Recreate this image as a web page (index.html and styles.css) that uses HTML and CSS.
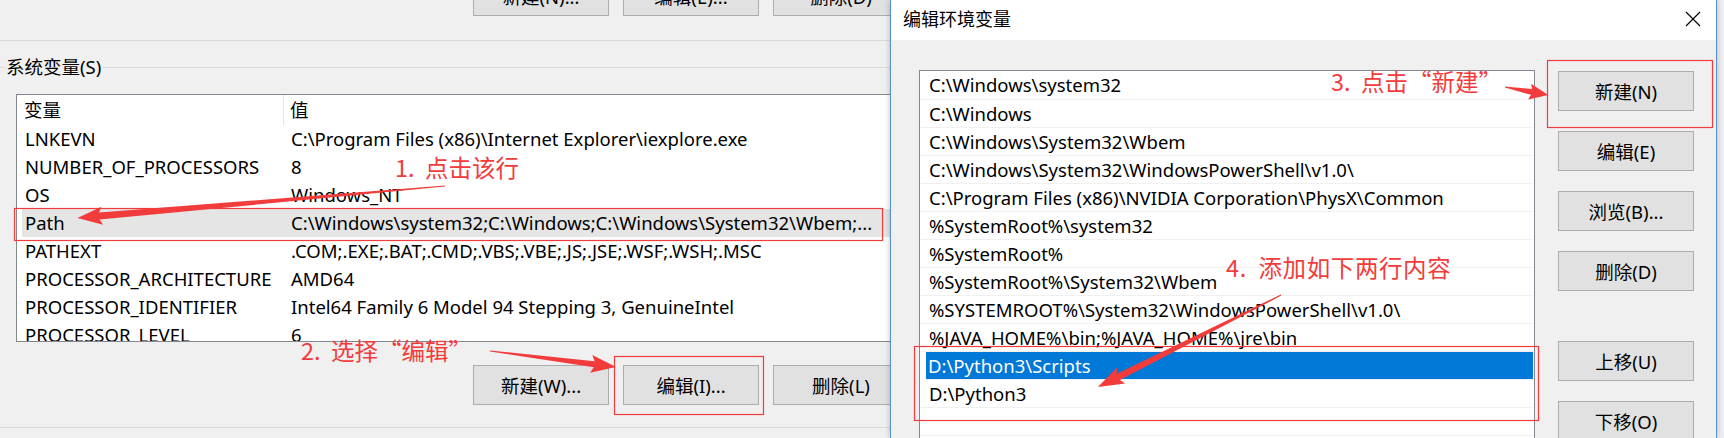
FILE: index.html
```html
<!DOCTYPE html>
<html lang="zh-CN">
    <head>
        <meta charset="UTF-8">
        <title>编辑环境变量</title>
        <link rel="stylesheet" href="styles.css">
    </head>
    <body>
        <!-- Background window: 环境变量 -->
        <div class="env-window">
            <div class="btn-row top-row">
                <button class="win-btn">新建(N)...</button>
                <button class="win-btn">编辑(E)...</button>
                <button class="win-btn">删除(D)</button>
            </div>
            <div class="divider top-divider"></div>

            <div class="group-title"><span>系统变量(S)</span></div>

            <div class="var-list">
                <div class="var-body">
                    <div class="var-row var-head">
                        <span class="col-name">变量</span>
                        <span class="col-value">值</span>
                    </div>
                    <div class="var-row"><span class="col-name">LNKEVN</span><span class="col-value">C:\Program Files (x86)\Internet Explorer\iexplore.exe</span></div>
                    <div class="var-row"><span class="col-name">NUMBER_OF_PROCESSORS</span><span class="col-value">8</span></div>
                    <div class="var-row"><span class="col-name">OS</span><span class="col-value">Windows_NT</span></div>
                    <div class="var-row hover"><span class="col-name">Path</span><span class="col-value">C:\Windows\system32;C:\Windows;C:\Windows\System32\Wbem;...</span></div>
                    <div class="var-row"><span class="col-name">PATHEXT</span><span class="col-value">.COM;.EXE;.BAT;.CMD;.VBS;.VBE;.JS;.JSE;.WSF;.WSH;.MSC</span></div>
                    <div class="var-row"><span class="col-name">PROCESSOR_ARCHITECTURE</span><span class="col-value">AMD64</span></div>
                    <div class="var-row"><span class="col-name">PROCESSOR_IDENTIFIER</span><span class="col-value">Intel64 Family 6 Model 94 Stepping 3, GenuineIntel</span></div>
                    <div class="var-row"><span class="col-name">PROCESSOR_LEVEL</span><span class="col-value">6</span></div>
                </div>
                <div class="scrollbar">
                    <div class="sb-arrow">&#9652;</div>
                    <div class="sb-thumb"></div>
                    <div class="sb-track"></div>
                    <div class="sb-arrow">&#9662;</div>
                </div>
            </div>

            <div class="btn-row bottom-row">
                <button class="win-btn">新建(W)...</button>
                <button class="win-btn">编辑(I)...</button>
                <button class="win-btn">删除(L)</button>
            </div>
            <div class="divider bottom-divider"></div>
        </div>

        <!-- Foreground dialog -->
        <div class="dialog">
            <div class="title-bar">
                <span class="title">编辑环境变量</span>
                <svg class="close" width="16" height="16" viewBox="0 0 16 16">
                    <path d="M1 1 L15 15 M15 1 L1 15" stroke="#000" stroke-width="1.2" fill="none"/>
                </svg>
            </div>
            <div class="dialog-body">
                <div class="path-list">
                    <div class="path-row">C:\Windows\system32</div>
                    <div class="path-row">C:\Windows</div>
                    <div class="path-row">C:\Windows\System32\Wbem</div>
                    <div class="path-row">C:\Windows\System32\WindowsPowerShell\v1.0\</div>
                    <div class="path-row">C:\Program Files (x86)\NVIDIA Corporation\PhysX\Common</div>
                    <div class="path-row">%SystemRoot%\system32</div>
                    <div class="path-row">%SystemRoot%</div>
                    <div class="path-row">%SystemRoot%\System32\Wbem</div>
                    <div class="path-row">%SYSTEMROOT%\System32\WindowsPowerShell\v1.0\</div>
                    <div class="path-row">%JAVA_HOME%\bin;%JAVA_HOME%\jre\bin</div>
                    <div class="path-row selected">D:\Python3\Scripts</div>
                    <div class="path-row">D:\Python3</div>
                    <div class="path-row"></div>
                </div>
                <div class="side-buttons">
                    <button class="win-btn">新建(N)</button>
                    <button class="win-btn">编辑(E)</button>
                    <button class="win-btn">浏览(B)...</button>
                    <button class="win-btn">删除(D)</button>
                    <button class="win-btn gap-before">上移(U)</button>
                    <button class="win-btn">下移(O)</button>
                </div>
            </div>
        </div>

        <!-- Red annotations drawn over the screenshot -->
        <div class="annotations">
            <svg class="arrows" width="1724" height="438" viewBox="0 0 1724 438">
                <g fill="#f23c3c">
                    <polygon transform="translate(445 186) rotate(175.03)" points="0,-0.6 347,-3.5 344,-9 369,0 344,9 347,3.5 0,0.6"/>
                    <polygon transform="translate(490 351) rotate(7.24)" points="0,-0.6 105,-3 102,-9 127,0 102,9 105,3 0,0.6"/>
                    <polygon transform="translate(1505 87) rotate(10.5)" points="0,-0.6 27,-3 25,-8 44,0 25,8 27,3 0,0.6"/>
                    <polygon transform="translate(1281 295) rotate(153.3)" points="0,-0.6 182,-3.5 179,-9 205,0 179,9 182,3.5 0,0.6"/>
                </g>
                <g fill="none" stroke="#f23c3c" stroke-width="1.2">
                    <rect x="14.5" y="208.5" width="868" height="32"/>
                    <rect x="614.5" y="356.5" width="149" height="58"/>
                    <rect x="1547.5" y="60.5" width="165" height="67"/>
                    <rect x="914.5" y="346.5" width="624" height="74"/>
                </g>
            </svg>
            <span class="note note-1">1.&nbsp; 点击该行</span>
            <span class="note note-2">2.&nbsp; 选择“编辑”</span>
            <span class="note note-3">3.&nbsp; 点击“新建”</span>
            <span class="note note-4">4.&nbsp; 添加如下两行内容</span>
        </div>
    </body>
</html>
```

FILE: styles.css
```css
/* General Styles */
body {
    margin: 0;
    width: 1724px;
    height: 438px;
    overflow: hidden;
    position: relative;
    background-color: #f0f0f0;
    font-family: "Noto Sans", "Noto Sans CJK SC", sans-serif;
    font-size: 18.5px;
    color: #000;
}

/* Background window */
.env-window {
    width: 930px;
    height: 438px;
    overflow: hidden;
}

.btn-row {
    display: flex;
    gap: 14px;
    padding-left: 473px;
}

.top-row {
    margin-top: -24px;
}

.bottom-row {
    margin-top: 23px;
}

.win-btn {
    width: 136px;
    height: 40px;
    padding: 0;
    background-color: #e1e1e1;
    border: 1px solid #adadad;
    font-family: inherit;
    font-size: 18.5px;
    color: #000;
}

.divider {
    border-top: 1px solid #d9d9d9;
}

.top-divider {
    margin-top: 24px;
}

.bottom-divider {
    margin-top: 22px;
}

.group-title {
    display: flex;
    align-items: center;
    height: 26px;
    margin-top: 13px;
    line-height: 26px;
}

.group-title::before {
    content: "";
    width: 5px;
    margin-right: 1px;
    border-top: 1px solid #dcdcdc;
}

.group-title::after {
    content: "";
    flex: 1;
    margin-left: 2px;
    border-top: 1px solid #dcdcdc;
}

.var-list {
    display: flex;
    margin: 14px 0 0 16px;
    width: 900px;
    height: 246px;
    border: 1px solid #828790;
    background-color: #fff;
    overflow: hidden;
}

.var-body {
    flex: 1;
    padding-left: 5px;
}

.var-row {
    display: flex;
    height: 28px;
    line-height: 28px;
    white-space: nowrap;
}

.var-head {
    height: 30px;
    line-height: 30px;
}

.col-name {
    width: 263px;
    padding-left: 3px;
}

.col-value {
    padding-left: 3px;
}

.var-head .col-name {
    width: 259px;
    padding-left: 2px;
    border-right: 1px solid #e5e5e5;
    margin-right: 3px;
}

.var-row.hover {
    background-color: #e5e5e5;
}

.scrollbar {
    display: flex;
    flex-direction: column;
    width: 17px;
    background-color: #f0f0f0;
}

.sb-arrow {
    height: 17px;
    font-size: 11px;
    line-height: 17px;
    color: #606060;
    padding-left: 1px;
}

.sb-thumb {
    height: 56px;
    margin-top: 40px;
    background-color: #cdcdcd;
}

.sb-track {
    flex: 1;
}

/* Foreground dialog */
.dialog {
    position: absolute;
    left: 890px;
    top: 0;
    width: 825px;
    height: 438px;
    overflow: hidden;
    border-left: 1px solid #5a8fd6;
    border-right: 1px solid #5a8fd6;
    background-color: #f0f0f0;
    box-shadow: 0 0 6px rgba(0, 0, 0, 0.25);
}

.title-bar {
    display: flex;
    align-items: center;
    justify-content: space-between;
    height: 40px;
    padding: 0 15px 0 12px;
    background-color: #fff;
}

.title {
    font-size: 18px;
    margin-top: -4px;
}

.close {
    margin-top: -2px;
}

.dialog-body {
    display: flex;
    gap: 23px;
    padding: 30px 0 0 28px;
}

.path-list {
    width: 614px;
    height: 400px;
    border: 1px solid #828790;
    background-color: #fff;
}

.path-row {
    height: 27px;
    line-height: 27px;
    margin: 0 1px 0 1px;
    padding-left: 8px;
    border-bottom: 1px solid #f0f0f0;
    white-space: nowrap;
}

.path-row:first-child {
    height: 28px;
    line-height: 28px;
}

.path-row.selected {
    background-color: #0078d7;
    color: #fff;
    margin-left: 6px;
    padding-left: 2px;
}

.side-buttons {
    display: flex;
    flex-direction: column;
    gap: 20px;
    padding-top: 1px;
}

.side-buttons .gap-before {
    margin-top: 30px;
}

/* Annotations */
.annotations {
    position: absolute;
    inset: 0;
    pointer-events: none;
}

.arrows {
    position: absolute;
    left: 0;
    top: 0;
}

.note {
    position: absolute;
    font-family: "Noto Sans CJK SC", sans-serif;
    font-size: 23.5px;
    line-height: 1;
    color: #f23c3c;
    white-space: nowrap;
}

.note-1 {
    left: 395px;
    top: 156px;
}

.note-2 {
    left: 301px;
    top: 339px;
}

.note-3 {
    left: 1331px;
    top: 70px;
}

.note-4 {
    left: 1226px;
    top: 256px;
    letter-spacing: 0.6px;
}
```
